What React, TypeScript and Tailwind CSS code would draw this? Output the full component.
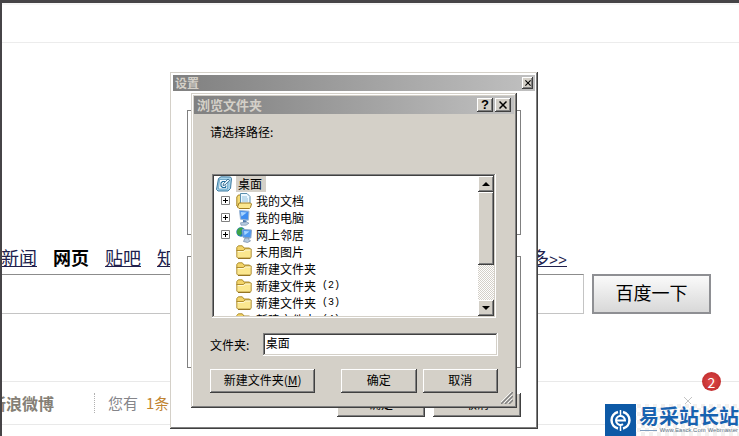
import { ReactNode } from "react";

const raised =
  "bg-[#d4d0c8] shadow-[inset_-1px_-1px_#404040,inset_1px_1px_#fff,inset_-2px_-2px_#808080]";
const sunken =
  "bg-white shadow-[inset_-1px_-1px_#fff,inset_1px_1px_#808080,inset_-2px_-2px_#d4d0c8,inset_2px_2px_#404040]";
const windowFrame =
  "shadow-[inset_-1px_-1px_#404040,inset_1px_1px_#d4d0c8,inset_-2px_-2px_#808080,inset_2px_2px_#fff]";

const FolderIcon = () => (
  <svg className="h-4 w-4" viewBox="0 0 16 16">
    <path d="M.8 3.500L2.300 1.800h4L8 4h5.500l.8 1v2H.8z" fill="#f3d469" stroke="#a58423" strokeWidth=".9" />
    <path d="M.8 13V6.500h6.500L9 5h6.200v8l-1 1.300H2z" fill="#fbe78f" stroke="#a88628" strokeWidth=".9" />
    <path d="M1.800 7.500h6L9.500 6h5" fill="none" stroke="#fff9d6" />
    <path d="M2 14.300h12.300" stroke="#8a6a17" />
  </svg>
);

const DesktopIcon = () => (
  <svg className="h-4 w-4" viewBox="0 0 16 16">
    <path d="M2.500 2.500L5 .8l9.500.2 1 1.500-1 10-2.500 2.500H2L.5 13.500z" fill="#a6d3ea" stroke="#2b6d96" strokeWidth=".9" />
    <path d="M3.500 3.500h8.500L11.500 13h-9z" fill="#f7fcff" stroke="#5b9cc0" strokeWidth=".8" />
    <path d="M9 5.500H6.500L5 7v3l1.500 1.500h3l.5-2" fill="none" stroke="#1f6d9c" strokeWidth="1.100" />
    <path d="M7 9.500l.5-2L12 3l1.700 1.500L9 9z" fill="#e2f3fc" stroke="#235b80" strokeWidth=".8" />
  </svg>
);

const DocumentsIcon = () => (
  <svg className="h-4 w-4" viewBox="0 0 16 16">
    <path d="M.8 4l1.500-2H6l1 2v9l-1 1.500H2.500L.8 13z" fill="#f5dc77" stroke="#a58423" />
    <path d="M4.500.5H11L14 3.500V12H4.500z" fill="#eef8ff" stroke="#5a8fae" />
    <path d="M6 4h5M6 6h6M6 8h6" stroke="#8fc0dc" />
    <path d="M3 10h11.500l1 1-1 3.500-1 1H3L1.500 14z" fill="#fbe790" stroke="#a07c20" />
  </svg>
);

const ComputerIcon = () => (
  <svg className="h-4 w-4" viewBox="0 0 16 16">
    <path d="M3.500.5l9.500.7-.7 9-7.800-1z" fill="#3f8df0" stroke="#9db6d2" />
    <path d="M4.800 2l6 .5-5.300 4z" fill="#a9d5ff" />
    <path d="M7 10l3.500.5v2H7z" fill="#4a78ad" />
    <path d="M4.500 12.800l6-.8 2.500 1.200-3 2H5z" fill="#b8cce2" stroke="#7d94b0" strokeWidth=".7" />
  </svg>
);

const NetworkIcon = () => (
  <svg className="h-4 w-4" viewBox="0 0 16 16">
    <circle cx="5" cy="5" r="4.700" fill="#2579c4" />
    <path d="M.8 4l2-3 3.200-.5 1 1.500-2 2 1 2-2 3-3-2z" fill="#3fa447" />
    <path d="M6.500 2.500l9 .5-.7 8-7.800-.8z" fill="#4b98f2" stroke="#8aa5c6" />
    <path d="M8 4l5.500.4-5 3.800z" fill="#a8d6ff" />
    <path d="M9 11h4v1.500l1.500 1.500-3 1.500-4-1z" fill="#b4c9e0" stroke="#7086a3" strokeWidth=".7" />
  </svg>
);

const items = [
  { name: "我的文档", icon: <DocumentsIcon />, expandable: true },
  { name: "我的电脑", icon: <ComputerIcon />, expandable: true },
  { name: "网上邻居", icon: <NetworkIcon />, expandable: true },
  { name: "未用图片", icon: <FolderIcon /> },
  { name: "新建文件夹", icon: <FolderIcon /> },
  { name: "新建文件夹", suffix: "(2)", icon: <FolderIcon /> },
  { name: "新建文件夹", suffix: "(3)", icon: <FolderIcon /> },
  { name: "新建文件夹", suffix: "(4)", icon: <FolderIcon /> },
];

const CloseIcon = ({ className }: { className: string }) => (
  <svg className={className} viewBox="0 0 8 8" stroke="#000" strokeWidth="1.500">
    <path d="M.5.5l7 7M7.500.5l-7 7" />
  </svg>
);

function DialogButton({ children, className }: { children: ReactNode; className: string }) {
  return (
    <button type="button" className={`${raised} pb-[2px] ${className}`}>
      {children}
    </button>
  );
}

function FolderTree() {
  return (
    <div className={`${sunken} ml-[2px] flex h-36 w-[284px] p-[2px]`}>
      <ul className="flex-1 overflow-hidden leading-4">
        <li>
          <div className="flex h-4 items-center gap-1 pl-[2px]">
            <DesktopIcon />
            <span className="bg-[#d4d0c8] pr-1 pl-[2px]">桌面</span>
          </div>
          <ul>
            {items.map((item, i) => (
              <li key={i} className="flex h-[17px] items-center gap-1 pl-[7px]">
                <span className="mr-[2px] flex w-[9px]">
                  {item.expandable && (
                    <svg className="h-[9px] w-[9px]" viewBox="0 0 9 9" fill="none">
                      <path d="M.5.5h8v8h-8z" stroke="#808080" />
                      <path d="M2 4.500h5M4.500 2v5" stroke="#000" />
                    </svg>
                  )}
                </span>
                {item.icon}
                <span>{item.name}</span>
                {item.suffix && (
                  <span className="pl-[2px] font-['Liberation_Mono',monospace] text-[10px]">
                    {item.suffix}
                  </span>
                )}
              </li>
            ))}
          </ul>
        </li>
      </ul>
      <div className="flex w-4 flex-col bg-[repeating-conic-gradient(#fff_0%_25%,#d4d0c8_0%_50%)] bg-[length:2px_2px]">
        <button type="button" aria-label="向上" className={`${raised} flex h-4 items-center justify-center`}>
          <svg className="h-1 w-2" viewBox="0 0 8 4">
            <path d="M4 0l4 4H0z" />
          </svg>
        </button>
        <div className={`${raised} h-[73px]`} />
        <button type="button" aria-label="向下" className={`${raised} mt-auto flex h-4 items-center justify-center`}>
          <svg className="h-1 w-2" viewBox="0 0 8 4">
            <path d="M0 0h8L4 4z" />
          </svg>
        </button>
      </div>
    </div>
  );
}

function SettingsDialog() {
  return (
    <section className={`${windowFrame} absolute top-[69px] left-[168px] w-[368px] bg-white p-[3px] text-xs`}>
      <div className="flex h-4 items-center justify-between bg-linear-to-r from-[#808080] to-[#c0c0c0] pr-[2px] pl-[2px]">
        <h2 className="leading-4 font-bold text-[#d4d0c8]">设置</h2>
        <button type="button" aria-label="关闭设置" className={`${raised} flex h-3 w-[11px] items-center justify-center`}>
          <CloseIcon className="h-[6px] w-[6px]" />
        </button>
      </div>
      <div className="px-[14px] pt-[19px] pb-[9px]">
        <div className="h-[125px] border border-[#808080]" />
        <div className="mt-[21px] h-28 border border-[#808080]" />
        <div className="mt-[25px] flex justify-end gap-2">
          <DialogButton className="h-6 w-[88px]">确定</DialogButton>
          <DialogButton className="h-6 w-[88px]">取消</DialogButton>
        </div>
      </div>
    </section>
  );
}

function BrowseDialog() {
  return (
    <section className={`${windowFrame} absolute top-[90px] left-[189px] w-[326px] bg-[#d4d0c8] p-[3px] text-xs`}>
      <div className="flex h-[18px] items-center bg-linear-to-r from-[#808080] to-[#c0c0c0] pr-[3px] pl-[3px]">
        <h2 className="flex-1 text-[13px] leading-[18px] font-bold text-[#d4d0c8]">浏览文件夹</h2>
        <button
          type="button"
          className={`${raised} mr-[2px] h-[14px] w-4 font-['Liberation_Sans',sans-serif] text-[13px] leading-[14px] font-bold`}
        >
          ?
        </button>
        <button type="button" aria-label="关闭" className={`${raised} flex h-[14px] w-4 items-center justify-center`}>
          <CloseIcon className="h-2 w-2" />
        </button>
      </div>
      <div className="px-4 pt-[10px] pb-3">
        <p className="mb-[34px] leading-4">请选择路径:</p>
        <FolderTree />
        <div className="mt-[15px] flex items-center">
          <label htmlFor="folder" className="w-[53px]">
            文件夹:
          </label>
          <input id="folder" defaultValue="桌面" className={`${sunken} h-[23px] w-[236px] px-[3px] pb-1 outline-none`} />
        </div>
        <div className="mt-[13px] flex gap-[6px]">
          <DialogButton className="mr-5 h-6 w-[106px]">
            新建文件夹(<u>M</u>)
          </DialogButton>
          <DialogButton className="h-6 w-[76px]">确定</DialogButton>
          <DialogButton className="h-6 w-[76px]">取消</DialogButton>
        </div>
      </div>
      <svg className="absolute right-1 bottom-1 h-3 w-3" viewBox="0 0 12 12" fill="none">
        <path d="M0 12L12 0M4 12l8-8M8 12l4-4" stroke="#808080" strokeWidth="1.500" />
        <path d="M-1 11L11-1M3 11l8-8M7 11l4-4" stroke="#fff" strokeWidth=".8" />
      </svg>
    </section>
  );
}

function SiteMark() {
  return (
    <div className="absolute right-0 bottom-0 flex h-8 w-[134px] bg-[repeating-conic-gradient(#fff_0%_25%,#f3f1ef_0%_50%)] bg-[length:8px_8px]">
      <svg className="h-8 w-[31px]" viewBox="0 0 31 32" fill="none">
        <path d="M0 0h31v32H0z" fill="#0d59a6" />
        <path d="M13 8a8.500 8.500 0 0 0 0 16.500M18 8a8.500 8.500 0 0 1 0 16.500" stroke="#fff" strokeWidth="2.500" />
        <path d="M11 16.500h9a4.500 4.500 0 1 0-2 3.700" stroke="#fff" strokeWidth="2" />
        <path d="M15.500 6v5M15.500 22v5" stroke="#fff" strokeWidth="1.500" />
      </svg>
      <div className="flex flex-1 flex-col items-end pt-px whitespace-nowrap">
        <span className="text-[20px] leading-[22px] font-bold text-[#1762b0]">易采站长站</span>
        <span className="flex w-full items-center gap-[2px] pr-px pl-1 font-['Liberation_Sans',sans-serif] text-[6px] leading-[7px] text-[#5f7688]">
          <i className="h-px flex-1 bg-[#7f9cbd]" />
          Www.Easck.Com Webmaster
        </span>
      </div>
    </div>
  );
}

export default function App() {
  return (
    <main className="relative min-h-screen overflow-hidden border-t-[3px] border-l-2 border-[#464447] bg-white font-['Noto_Sans_CJK_SC',sans-serif] text-black">
      <header className="h-10 border-t-2 border-b border-t-[#f6f6f6] border-b-[#ececec]" />

      <nav className="mt-[200px] flex h-7 w-[565px] gap-4 text-lg text-[#20204c]">
        <a href="#news" className="-ml-px underline">新闻</a>
        <b className="text-black">网页</b>
        <a href="#tieba" className="underline">贴吧</a>
        <a href="#zhidao" className="underline">知道</a>
        <a href="#more" className="ml-auto underline">
          更多<span className="font-['Liberation_Mono',monospace] text-[15px]">&gt;&gt;</span>
        </a>
      </nav>
      <form className="mt-[3px] flex gap-2">
        <input
          aria-label="搜索"
          className="h-10 w-[582px] border border-l-0 border-[#c4c4c4] border-t-[#8c8c8c] px-2 outline-none"
        />
        <button
          type="button"
          className="h-10 w-[119px] border-2 border-[#8e8f93] bg-linear-to-b from-[#fafafa] to-[#d8d8d8] pb-1 text-lg"
        >
          百度一下
        </button>
      </form>

      <footer className="mt-[67px] flex h-11 items-center border-y border-[#e9e9e9] text-[15px] text-[#85858a]">
        <b className="-ml-3 text-base text-[#857f76]">新浪微博</b>
        <span className="ml-10 h-5 border-l border-dotted border-[#b0b0b0]" />
        <span className="ml-[13px]">您有</span>
        <span className="ml-2 text-[#c18432]">1条</span>
      </footer>

      <span className="absolute top-[369px] right-[18px] flex h-[19px] w-[19px] items-center justify-center rounded-full bg-radial from-[#df4a49] to-[#b92427] text-sm text-white">
        2
      </span>
      <svg className="absolute right-[46px] bottom-[31px] h-2 w-[10px]" viewBox="0 0 10 8" fill="none" stroke="#c4c4c4">
        <path d="M1 0l8 8M9 0L1 8" />
      </svg>
      <SiteMark />

      <SettingsDialog />
      <BrowseDialog />
    </main>
  );
}
